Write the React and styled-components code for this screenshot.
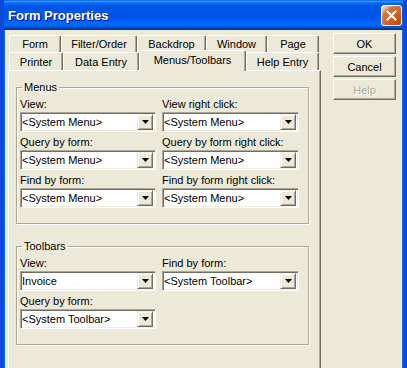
import styled, { createGlobalStyle } from 'styled-components';

const GlobalStyle = createGlobalStyle`
  * {
    box-sizing: border-box;
  }
  body {
    margin: 0;
    background: #ece9d8;
    font-family: 'Liberation Sans', Arial, sans-serif;
    font-size: 11px;
    color: #000;
  }
`

const Window = styled.div`
  width: 407px;
  height: 368px;
  overflow: hidden;
  display: flex;
  flex-direction: column;
  background: #ece9d8;
  border-left: 4px solid #0a4ad8;
  border-right: 4px solid #0a4ad8;
  box-shadow: inset 1px 0 #166aee, inset -1px 0 #166aee;
`
const TitleBar = styled.div`
  height: 30px;
  flex-shrink: 0;
  margin: 0 -4px;
  padding: 0 5px 0 8px;
  display: flex;
  align-items: center;
  justify-content: space-between;
  background: linear-gradient(to bottom, #0058ee 0%, #3a93ff 4%, #288eff 6%, #127dff 8%, #036ffc 10%, #0262ee 14%, #0057e5 20%, #0054e3 24%, #0055eb 56%, #005bf5 66%, #026afe 76%, #0062ef 86%, #0052d6 92%, #0040ab 94%, #003092 100%);
`
const Title = styled.span`
  color: #fff;
  font-weight: bold;
  font-size: 13px;
  text-shadow: 1px 1px #0f1089;
`
const CloseButton = styled.div`
  width: 21px;
  height: 21px;
  border: 1px solid #fff;
  border-radius: 3px;
  display: flex;
  align-items: center;
  justify-content: center;
  background: radial-gradient(circle at 90% 90%, #cc4600 0%, #dc6527 55%, #cd7546 70%, #ffccb2 90%, #fff 100%);
`
const Body = styled.div`
  display: flex;
  align-items: flex-start;
  padding: 5px 7px 0 4px;
  gap: 12px;
`
const TabArea = styled.div`
  width: 313px;
  display: flex;
  flex-direction: column;
`
const TabRow = styled.div`
  height: ${p => p.$h}px;
  display: flex;
  align-items: flex-start;
  padding-left: 1px;
`
const Tab = styled.div`
  width: ${p => p.$w}px;
  height: ${p => (p.$active ? p.$h + 3 : p.$h)}px;
  margin-top: ${p => (p.$active ? -2 : 0)}px;
  position: ${p => (p.$active ? 'relative' : 'static')};
  z-index: ${p => (p.$active ? 1 : 0)};
  display: flex;
  align-items: center;
  justify-content: center;
  padding-bottom: ${p => (p.$active ? 2 : 0)}px;
  background: #ece9d8;
  border-top: 1px solid #fff;
  border-left: 1px solid #fff;
  border-right: 1px solid #716f64;
  border-radius: 2px 2px 0 0;
  box-shadow: inset -1px 0 #aca899;
  white-space: nowrap;
`
const Panel = styled.div`
  height: 320px;
  padding: 10px 11px 0 7px;
  border-top: 1px solid #fff;
  border-left: 1px solid #fff;
  border-right: 1px solid #716f64;
  box-shadow: inset -1px 0 #aca899;
  display: flex;
  flex-direction: column;
  gap: 16px;
`
const Group = styled.fieldset`
  margin: 0;
  padding: 3px 10px 15px 3px;
  border: 1px solid #aca899;
  box-shadow: inset 1px 1px #fff, 1px 1px #fff;
  min-width: 0;
`
const Legend = styled.legend`
  margin-left: 2px;
  padding: 0 2px;
  line-height: 13px;
`
const Grid = styled.div`
  display: grid;
  grid-template-columns: 136px 137px;
  column-gap: 6px;
  row-gap: 3px;
`
const Field = styled.div`
  display: flex;
  flex-direction: column;
`
const Label = styled.div`
  height: 15px;
  line-height: 15px;
  white-space: nowrap;
`
const Combo = styled.div`
  height: 20px;
  display: flex;
  align-items: center;
  background: #fff;
  border-top: 1px solid #aca899;
  border-left: 1px solid #aca899;
  border-right: 1px solid #fff;
  border-bottom: 1px solid #fff;
  box-shadow: inset 1px 1px #716f64, inset -1px -1px #f1efe2;
  padding: 2px 2px 2px 1px;
`
const ComboText = styled.span`
  flex: 1;
  white-space: nowrap;
  overflow: hidden;
`
const DropButton = styled.div`
  width: 16px;
  height: 16px;
  display: flex;
  align-items: center;
  justify-content: center;
  background: #ece9d8;
  border-top: 1px solid #f1efe2;
  border-left: 1px solid #f1efe2;
  border-right: 1px solid #716f64;
  border-bottom: 1px solid #716f64;
  box-shadow: inset 1px 1px #fff, inset -1px -1px #aca899;
`
const ButtonColumn = styled.div`
  display: flex;
  flex-direction: column;
  gap: 2px;
  margin-top: -2px;
`
const Button = styled.div`
  width: 63px;
  height: 21px;
  display: flex;
  align-items: center;
  justify-content: center;
  background: #ece9d8;
  border-top: 1px solid #fff;
  border-left: 1px solid #fff;
  border-right: 1px solid #716f64;
  border-bottom: 1px solid #716f64;
  box-shadow: inset -1px -1px #aca899;
  color: ${p => (p.$disabled ? '#aca899' : '#000')};
  text-shadow: ${p => (p.$disabled ? '1px 1px #fff' : 'none')};
`

const row1 = [['Form', 52], ['Filter/Order', 76], ['Backdrop', 69], ['Window', 61], ['Page', 52]];
const row2 = [['Printer', 54], ['Data Entry', 76], ['Menus/Toolbars', 107], ['Help Entry', 73]];

const Arrow = () => (
  <svg width="7" height="4" viewBox="0 0 7 4">
    <path d="M0 0h7L3.5 4z" fill="#000" />
  </svg>
);

const Select = ({ label, value }) => (
  <Field>
    <Label>{label}</Label>
    <Combo>
      <ComboText>{value}</ComboText>
      <DropButton><Arrow /></DropButton>
    </Combo>
  </Field>
);

const App = () => {
  return (
    <>
      <GlobalStyle />
      <Window>
        <TitleBar>
          <Title>Form Properties</Title>
          <CloseButton>
            <svg width="11" height="11" viewBox="0 0 11 11">
              <path d="M1.5 1.5l8 8M9.5 1.5l-8 8" stroke="#fff" strokeWidth="2.2" strokeLinecap="square" />
            </svg>
          </CloseButton>
        </TitleBar>
        <Body>
          <TabArea>
            <TabRow $h={17}>
              {row1.map(([name, w]) => (
                <Tab key={name} $w={w} $h={17}>{name}</Tab>
              ))}
            </TabRow>
            <TabRow $h={18}>
              {row2.map(([name, w]) => (
                <Tab key={name} $w={w} $h={18} $active={name === 'Menus/Toolbars'}>{name}</Tab>
              ))}
            </TabRow>
            <Panel>
              <Group>
                <Legend>Menus</Legend>
                <Grid>
                  <Select label="View:" value="<System Menu>" />
                  <Select label="View right click:" value="<System Menu>" />
                  <Select label="Query by form:" value="<System Menu>" />
                  <Select label="Query by form right click:" value="<System Menu>" />
                  <Select label="Find by form:" value="<System Menu>" />
                  <Select label="Find by form right click:" value="<System Menu>" />
                </Grid>
              </Group>
              <Group>
                <Legend>Toolbars</Legend>
                <Grid>
                  <Select label="View:" value="Invoice" />
                  <Select label="Find by form:" value="<System Toolbar>" />
                  <Select label="Query by form:" value="<System Toolbar>" />
                </Grid>
              </Group>
            </Panel>
          </TabArea>
          <ButtonColumn>
            <Button>OK</Button>
            <Button>Cancel</Button>
            <Button $disabled>Help</Button>
          </ButtonColumn>
        </Body>
      </Window>
    </>
  );
}

export default App;
